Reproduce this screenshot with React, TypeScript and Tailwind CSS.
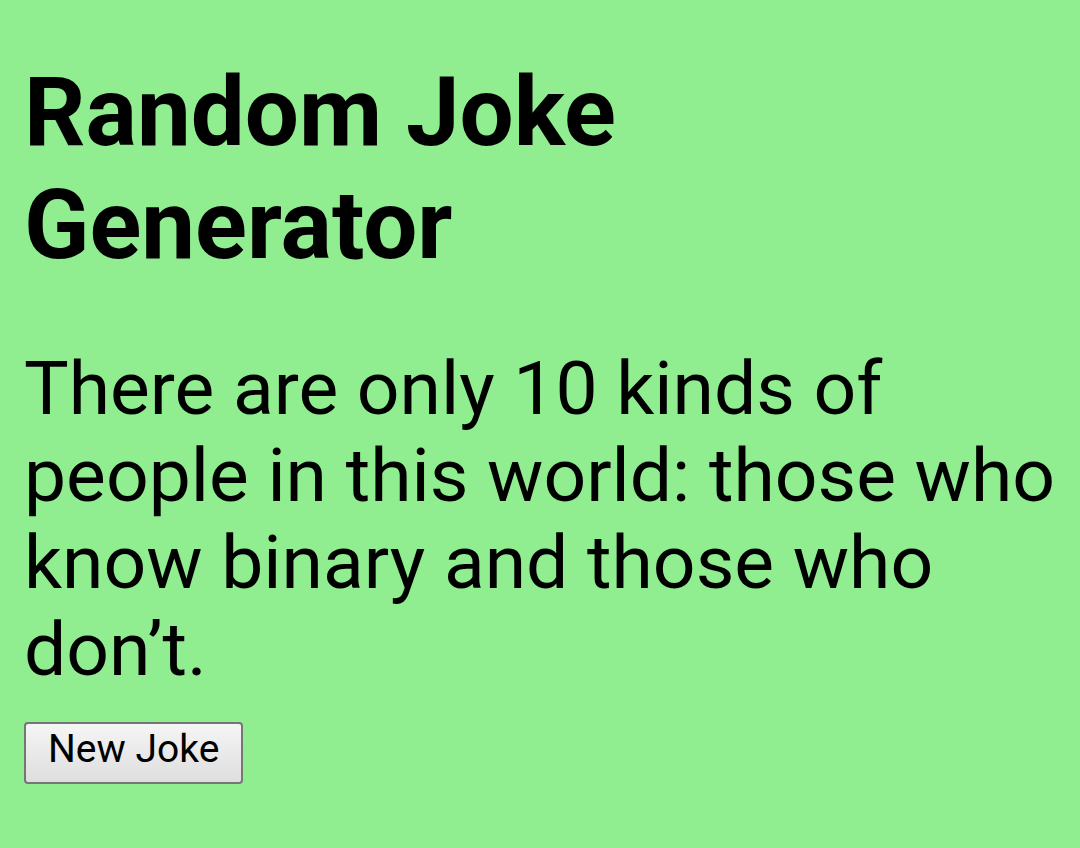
export default function App() {
  return (
    <div className="min-h-screen bg-[#90ee90] px-6 pt-[56px] text-black" style={{ fontFamily: "Roboto, 'Noto Sans', sans-serif" }}>
      <h1 className="m-0 text-[96px] font-bold leading-[112.5px]">Random Joke Generator</h1>
      <p className="mt-[64px] text-[75px] leading-[87px]">
        There are only 10 kinds of people in this world: those who know binary and those who don’t.
      </p>
      <button
        type="button"
        className="mt-[29px] rounded-[4px] border-2 border-[#767676] bg-gradient-to-b from-[#f5f5f5] to-[#dedede] px-[22px] pt-[5px] pb-[13px] text-[39px] leading-[40px]"
      >
        New Joke
      </button>
    </div>
  );
}
